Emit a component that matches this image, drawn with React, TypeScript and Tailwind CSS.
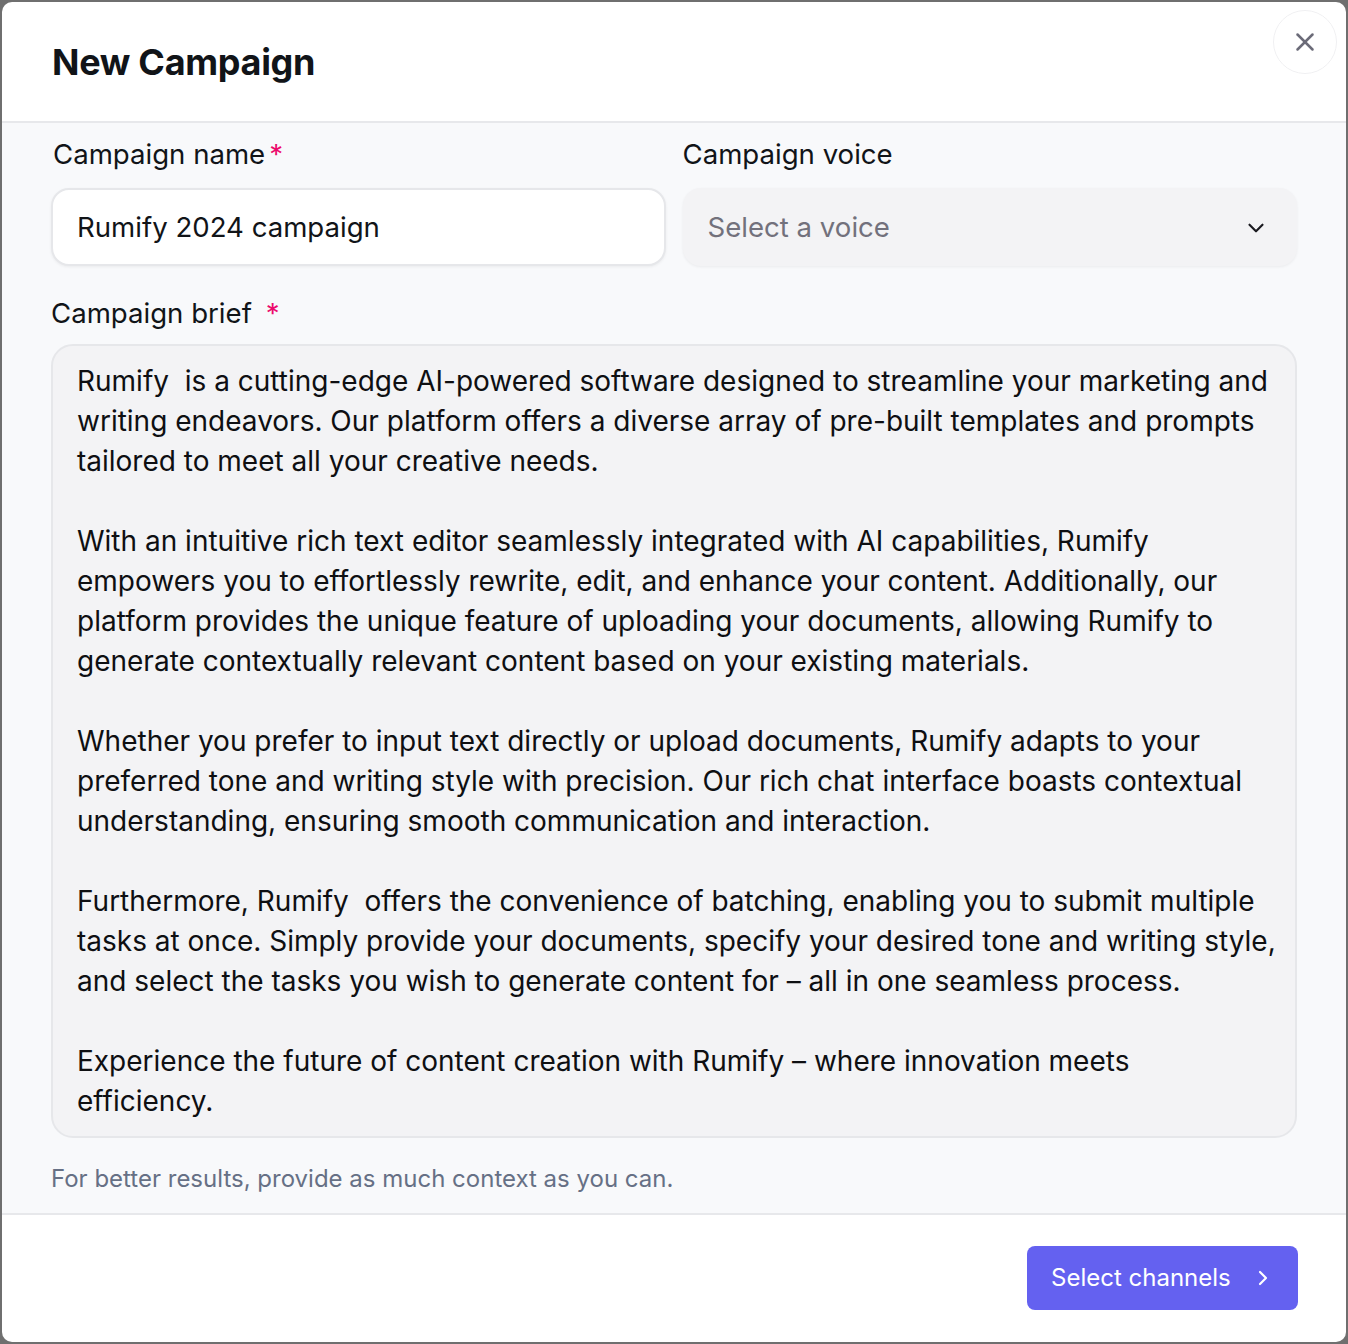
import React from "react";
import { X, ChevronDown, ChevronRight } from "lucide-react";

const brief: string[][] = [
  [
    "Rumify  is a cutting-edge AI-powered software designed to streamline your marketing and",
    "writing endeavors. Our platform offers a diverse array of pre-built templates and prompts",
    "tailored to meet all your creative needs.",
  ],
  [
    "With an intuitive rich text editor seamlessly integrated with AI capabilities, Rumify",
    "empowers you to effortlessly rewrite, edit, and enhance your content. Additionally, our",
    "platform provides the unique feature of uploading your documents, allowing Rumify to",
    "generate contextually relevant content based on your existing materials.",
  ],
  [
    "Whether you prefer to input text directly or upload documents, Rumify adapts to your",
    "preferred tone and writing style with precision. Our rich chat interface boasts contextual",
    "understanding, ensuring smooth communication and interaction.",
  ],
  [
    "Furthermore, Rumify  offers the convenience of batching, enabling you to submit multiple",
    "tasks at once. Simply provide your documents, specify your desired tone and writing style,",
    "and select the tasks you wish to generate content for – all in one seamless process.",
  ],
  [
    "Experience the future of content creation with Rumify – where innovation meets",
    "efficiency.",
  ],
];

export default function App() {
  return (
    <div
      className="min-h-[1344px] w-full bg-[#6f6f6f] p-[2px]"
      style={{ fontFamily: "Inter, 'Noto Sans', sans-serif" }}
    >
      <div className="flex h-[1340px] flex-col overflow-hidden rounded-[10px] bg-white text-[#111418]">
        {/* header */}
        <div className="relative flex h-[121px] shrink-0 items-center border-b-2 border-[#e7e8eb] pl-[50px]">
          <h1 className="text-[36px] font-bold tracking-[-0.3px]">New Campaign</h1>
          <button className="absolute right-[9px] top-[8px] flex h-[64px] w-[64px] items-center justify-center rounded-full border border-[#f0f0f2] text-[#6b6b78]">
            <X size={30} strokeWidth={2} />
          </button>
        </div>

        {/* body */}
        <div className="flex flex-1 flex-col bg-[#f8f9fb] px-[49px] pt-[13px]">
          <div className="grid grid-cols-2 gap-[17px]">
            <div className="flex flex-col">
              <label className="pl-[2px] text-[27.6px] leading-[36px]">
                Campaign name<span className="ml-[4px] text-[#ec0a6c]">*</span>
              </label>
              <div className="mt-[16px] flex h-[78px] items-center rounded-[18px] border-2 border-[#e6e7ea] bg-white pl-[24px] pt-[2px] text-[27.6px] shadow-[0_1px_3px_rgba(0,0,0,0.06)]">
                Rumify 2024 campaign
              </div>
            </div>
            <div className="flex flex-col">
              <label className="text-[27.6px] leading-[36px]">Campaign voice</label>
              <div className="mt-[16px] flex h-[78px] items-center justify-between rounded-[18px] bg-[#f3f3f5] pl-[25px] pr-[28px] pt-[2px] text-[27.6px] text-[#72717c] shadow-[0_1px_3px_rgba(0,0,0,0.06)]">
                <span>Select a voice</span>
                <ChevronDown size={26} strokeWidth={2} className="text-[#1c1c22]" />
              </div>
            </div>
          </div>

          <label className="mt-[29px] text-[27.6px] leading-[36px]">
            Campaign brief<span className="ml-[14px] text-[#ec0a6c]">*</span>
          </label>

          <div className="mt-[13px] rounded-[22px] border-2 border-[#e6e7ea] bg-[#f3f3f5] pb-[15px] pl-[24px] pr-[20px] pt-[15px] text-[28px] leading-[40px] text-[#0e0f12]">
            {brief.map((para, i) => (
              <div key={i} className={i > 0 ? "mt-[40px]" : ""}>
                {para.map((line, j) => (
                  <div key={j} className="whitespace-pre">
                    {line}
                  </div>
                ))}
              </div>
            ))}
          </div>

          <p className="mt-[25px] text-[24px] leading-[32px] text-[#667085]">
            For better results, provide as much context as you can.
          </p>
        </div>

        {/* footer */}
        <div className="flex h-[129px] shrink-0 items-start justify-end border-t-2 border-[#e7e8eb] pr-[48px] pt-[31px]">
          <button className="flex h-[64px] w-[271px] items-center gap-[20px] rounded-[8px] bg-[#6461f0] pl-[24px] text-[24px] text-white">
            <span>Select channels</span>
            <ChevronRight size={24} strokeWidth={2.2} />
          </button>
        </div>
      </div>
    </div>
  );
}
